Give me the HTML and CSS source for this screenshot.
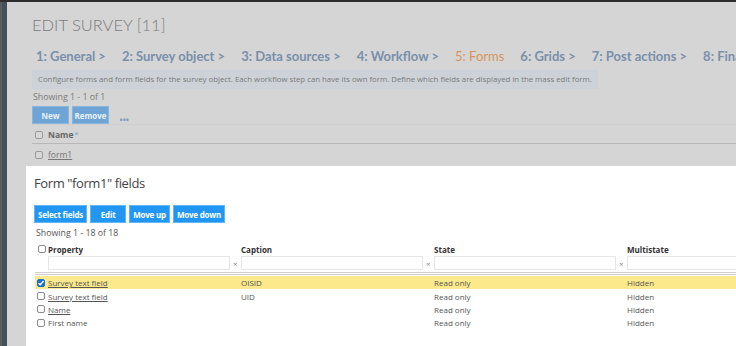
FILE: index.html
```html
<!DOCTYPE html>
<html lang="en">
<head>
  <meta charset="UTF-8" />
  <title>Edit survey</title>
  <link rel="stylesheet" href="styles.css">
</head>
<body>

  <div class="screen">
    <div class="rail"></div>

    <!-- PAGE BEHIND THE DIALOG -->
    <div class="page">
      <h1>EDIT SURVEY [11]</h1>

      <div class="steps">
        <span>1: General &gt;</span>
        <span>2: Survey object &gt;</span>
        <span>3: Data sources &gt;</span>
        <span>4: Workflow &gt;</span>
        <span class="current">5: Forms</span>
        <span>6: Grids &gt;</span>
        <span>7: Post actions &gt;</span>
        <span>8: Finalize</span>
      </div>

      <div class="hint">Configure forms and form fields for the survey object. Each workflow step can have its own form. Define which fields are displayed in the mass edit form.</div>

      <div class="count">Showing 1 - 1 of 1</div>

      <div class="toolbar">
        <button class="btn-muted">New</button>
        <button class="btn-muted">Remove</button>
        <span class="more">&bull;&bull;&bull;</span>
      </div>

      <div class="list-head">
        <input type="checkbox" class="cb cb-muted">
        <b>Name</b><sup>*</sup>
      </div>
      <div class="list-row">
        <input type="checkbox" class="cb cb-muted">
        <a href="#">form1</a>
      </div>
    </div>

    <!-- DIALOG -->
    <div class="dialog">
      <h2>Form "form1" fields</h2>

      <div class="actions">
        <button class="btn">Select fields</button>
        <button class="btn btn-edit">Edit</button>
        <button class="btn">Move up</button>
        <button class="btn">Move down</button>
      </div>

      <div class="count">Showing 1 - 18 of 18</div>

      <div class="grid">
        <div class="row head">
          <div><input type="checkbox" class="cb"></div>
          <div>Property</div>
          <div>Caption</div>
          <div>State</div>
          <div>Multistate</div>
        </div>
        <div class="row filters">
          <div></div>
          <div><input type="text"><span class="clear">&times;</span></div>
          <div><input type="text"><span class="clear">&times;</span></div>
          <div><input type="text"><span class="clear">&times;</span></div>
          <div><input type="text"><span class="clear">&times;</span></div>
        </div>

        <div class="body">
          <div class="row selected">
            <div><input type="checkbox" class="cb" checked></div>
            <div><a href="#">Survey text field</a></div>
            <div>OISID</div>
            <div>Read only</div>
            <div>Hidden</div>
          </div>
          <div class="row">
            <div><input type="checkbox" class="cb"></div>
            <div><a href="#">Survey text field</a></div>
            <div>UID</div>
            <div>Read only</div>
            <div>Hidden</div>
          </div>
          <div class="row">
            <div><input type="checkbox" class="cb"></div>
            <div><a href="#">Name</a></div>
            <div></div>
            <div>Read only</div>
            <div>Hidden</div>
          </div>
          <div class="row">
            <div><input type="checkbox" class="cb"></div>
            <div>First name</div>
            <div></div>
            <div>Read only</div>
            <div>Hidden</div>
          </div>
        </div>
      </div>
    </div>
  </div>

</body>
</html>
```

FILE: styles.css
```css
* {
  box-sizing: border-box;
}

body {
  margin: 0;
  font-family: 'Open Sans', sans-serif;
  background-color: #d5d5d5;
  overflow: hidden;
}

.screen {
  position: relative;
  display: flex;
  width: 736px;
  height: 346px;
  border-top: 2px solid #2e2e2e;
  overflow: hidden;
}

.rail {
  width: 7px;
  flex-shrink: 0;
  background: linear-gradient(to right, #5a5c5d 2px, #41525a 2px);
}

/* page behind the dialog */
.page {
  flex: 1;
  padding: 11px 0 0 25px;
  white-space: nowrap;
}

h1 {
  margin: 0;
  width: fit-content;
  font-family: 'Lato', sans-serif;
  font-weight: 300;
  font-size: 16.5px;
  line-height: 25px;
  color: #7c7c7c;
}

.steps {
  margin-top: 8px;
  display: flex;
  gap: 16px;
  padding-left: 4px;
  font-family: 'Lato', sans-serif;
  font-weight: 700;
  font-size: 13px;
  line-height: 20px;
  color: #7890ab;
}

.steps .current {
  color: #d8945c;
  font-weight: 400;
}

.hint {
  margin-top: 4px;
  width: fit-content;
  height: 19px;
  padding: 0 6px;
  background-color: #ccd2d8;
  font-size: 7.8px;
  line-height: 19px;
  color: #7a7a7a;
}

.count {
  margin-top: 2px;
  font-size: 8.8px;
  line-height: 12px;
  color: #7a7a7a;
  padding-left: 1px;
}

.toolbar {
  margin-top: 3px;
  display: flex;
  align-items: flex-end;
  gap: 3px;
  height: 18px;
}

button {
  font-family: 'Open Sans', sans-serif;
  font-weight: 700;
  font-size: 8px;
  cursor: pointer;
}

.btn-muted {
  width: 37px;
  height: 18px;
  padding: 0;
  border: 1px solid #8bb6dc;
  background-color: #6ea5d6;
  color: #e9f1f8;
}

.more {
  margin-left: 7px;
  margin-bottom: -1px;
  font-size: 11px;
  line-height: 10px;
  color: #7c9cbf;
  letter-spacing: -1px;
}

.list-head,
.list-row {
  display: flex;
  align-items: center;
  gap: 5px;
  padding-left: 3px;
  font-size: 8.5px;
  color: #6a6a6a;
}

.list-head {
  height: 20px;
  border-top: 1px solid #cfcfcf;
  border-bottom: 1px solid #b8b8b8;
  padding-top: 1px;
}

.list-head b {
  color: #666;
}

.list-head sup {
  margin-left: -4px;
  font-size: 7px;
  color: #7c9cbf;
}

.list-row {
  height: 21px;
}

.list-row a {
  color: #777;
}

/* checkboxes */
.cb {
  appearance: none;
  width: 8px;
  height: 8px;
  margin: 0;
  border: 1px solid #8a8a8a;
  border-radius: 2px;
  background-color: #fff;
}

.cb-muted {
  border-color: #9a9a9a;
  background-color: #d8d8d8;
}

.cb:checked {
  border-color: #1b6fd0;
  background: #1b6fd0 url("data:image/svg+xml,%3Csvg xmlns='http://www.w3.org/2000/svg' viewBox='0 0 8 8'%3E%3Cpath d='M1.5 4.2 3.2 5.8 6.6 2' fill='none' stroke='white' stroke-width='1.4'/%3E%3C/svg%3E") center / 8px 8px no-repeat;
}

/* dialog */
.dialog {
  position: absolute;
  left: 26px;
  top: 164px;
  right: 0;
  bottom: 0;
  background-color: #fff;
  padding: 6px 0 0 8px;
  overflow: hidden;
  white-space: nowrap;
}

h2 {
  margin: 0;
  font-weight: 400;
  font-size: 13px;
  line-height: 22px;
  letter-spacing: -0.4px;
  color: #444;
}

.actions {
  margin-top: 11px;
  display: flex;
  gap: 3px;
}

.btn {
  height: 18px;
  padding: 0 3px;
  border: 1px solid #64b5f6;
  background-color: #2196f3;
  color: #fff;
  letter-spacing: -0.2px;
}

.btn-edit {
  width: 36px;
}

.dialog .count {
  margin-top: 4px;
  color: #555;
  padding-left: 2px;
}

.grid {
  margin-top: 4px;
  margin-left: 1px;
  width: 800px;
  font-size: 8px;
  color: #555;
}

.row {
  display: grid;
  grid-template-columns: 13px 193px 193px 193px 193px;
  align-items: center;
  height: 13.4px;
}

.row > div:first-child {
  display: flex;
  align-items: center;
  padding-left: 2px;
}

.head {
  font-weight: 700;
  color: #333;
  height: 12px;
}

.head > div:first-child {
  padding-left: 3px;
}

.filters {
  height: 16px;
  border-bottom: 3px double #cfcfcf;
  box-sizing: content-box;
  padding-bottom: 1px;
}

.filters > div {
  display: flex;
  align-items: center;
}

.filters input {
  width: 182px;
  height: 14px;
  border: 1px solid #e6e6e6;
  padding: 0;
}

.clear {
  margin-left: 3px;
  font-size: 8px;
  color: #888;
}

.body {
  margin-top: 1px;
  height: 52px;
  overflow: hidden;
}

.selected {
  background-color: #fbe98b;
}

.row a {
  color: #555;
}
```
